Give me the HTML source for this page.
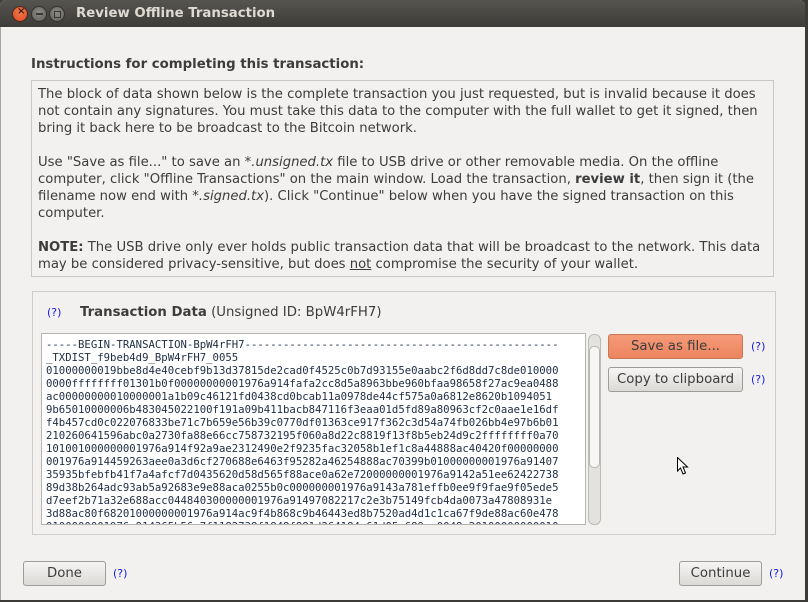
<!DOCTYPE html>
<html><head><meta charset="utf-8">
<style>
*{margin:0;padding:0;box-sizing:border-box}
body{width:808px;height:602px;background:#3c3b37;position:relative;overflow:hidden;font-family:"DejaVu Sans","Liberation Sans",sans-serif;color:#3c3c3c}
.win{position:absolute;left:0;top:0;width:805px;height:600px;background:#f2f1f0;border-radius:6px 6px 0 0;overflow:hidden;box-shadow:inset 1px 0 0 #a8a6a2}
.title{position:absolute;left:0;top:0;width:805px;height:27px;background:linear-gradient(#55544f,#3d3c38);color:#dfdbd2;font-weight:bold;font-size:13.3px;line-height:27px;padding-left:76px}
.btnc{position:absolute;top:6px;width:16px;height:16px;border-radius:50%}
.abs{position:absolute;white-space:nowrap}
.box{position:absolute;left:31px;top:80px;width:743px;height:197px;border:1px solid #c9c7c4}
.txt{font-size:13.2px;line-height:17px;color:#3c3c3c}
.frame{position:absolute;left:32px;top:291px;width:744px;height:244px;border:1px solid #cfcdca}
.ta{position:absolute;left:41px;top:333px;width:545px;height:192px;background:#fff;border:1px solid #b6b4b0;overflow:hidden}
.mono{font-family:"DejaVu Sans Mono","Liberation Mono",monospace;font-size:10.65px;line-height:13px;color:#1f2d42;position:absolute;left:4px;top:4px;white-space:pre}
.q{color:#1a1ae6;font-size:11px}
.b{position:absolute;border:1px solid #9e9c98;border-radius:3px;background:linear-gradient(#f6f5f4,#dcdad6);font-size:13.3px;text-align:center;color:#3c3c3c}
</style></head><body>
<div class="win">
<div class="title">Review Offline Transaction</div>
<div class="btnc" style="left:12px;background:radial-gradient(circle at 50% 40%,#f57a4f,#d9481f);border:1px solid #4a2a1c"><span style="position:absolute;left:4px;top:-1px;font-size:10px;color:#3a1d10;font-weight:bold">×</span></div>
<div class="btnc" style="left:31px;background:radial-gradient(circle at 50% 40%,#8d8b86,#5f5e59);border:1px solid #33322f"><span style="position:absolute;left:4px;top:6px;width:7px;height:2px;background:#3a3935"></span></div>
<div class="btnc" style="left:49px;background:radial-gradient(circle at 50% 40%,#8d8b86,#5f5e59);border:1px solid #33322f"><span style="position:absolute;left:4px;top:4px;width:7px;height:7px;border:1px solid #3a3935"></span></div>

<div class="abs" style="left:31px;top:57px;font-size:13.3px;font-weight:bold;color:#3c3c3c">Instructions for completing this transaction:</div>
<div class="box"></div>
<div class="abs txt" style="left:38px;top:86px">The block of data shown below is the complete transaction you just requested, but is invalid because it does<br>not contain any signatures. You must take this data to the computer with the full wallet to get it signed, then<br>bring it back here to be broadcast to the Bitcoin network.<br><br>Use "Save as file..." to save an <i>*.unsigned.tx</i> file to USB drive or other removable media. On the offline<br>computer, click "Offline Transactions" on the main window. Load the transaction, <b>review it</b>, then sign it (the<br>filename now end with <i>*.signed.tx</i>). Click "Continue" below when you have the signed transaction on this<br>computer.<br><br><b>NOTE:</b> The USB drive only ever holds public transaction data that will be broadcast to the network. This data<br>may be considered privacy-sensitive, but does <u>not</u> compromise the security of your wallet.</div>

<div class="frame"></div>
<div class="abs q" style="left:47px;top:306px">(?)</div>
<div class="abs" style="left:80px;top:305px;font-size:13.3px"><b>Transaction Data</b> (Unsigned ID: BpW4rFH7)</div>
<div class="ta"><div class="mono">-----BEGIN-TRANSACTION-BpW4rFH7-------------------------------------------------
_TXDIST_f9beb4d9_BpW4rFH7_0055
01000000019bbe8d4e40cebf9b13d37815de2cad0f4525c0b7d93155e0aabc2f6d8dd7c8de010000
0000ffffffff01301b0f00000000001976a914fafa2cc8d5a8963bbe960bfaa98658f27ac9ea0488
ac00000000010000001a1b09c46121fd0438cd0bcab11a0978de44cf575a0a6812e8620b1094051
9b65010000006b483045022100f191a09b411bacb847116f3eaa01d5fd89a80963cf2c0aae1e16df
f4b457cd0c022076833be71c7b659e56b39c0770df01363ce917f362c3d54a74fb026bb4e97b6b01
210260641596abc0a2730fa88e66cc758732195f060a8d22c8819f13f8b5eb24d9c2ffffffff0a70
101001000000001976a914f92a9ae2312490e2f9235fac32058b1ef1c8a44888ac40420f00000000
001976a914459263aee0a3d6cf270688e6463f95282a46254888ac70399b01000000001976a91407
35935bfebfb41f7a4afcf7d0435620d58d565f88ace0a62e72000000001976a9142a51ee62422738
89d38b264adc93ab5a92683e9e88aca0255b0c000000001976a9143a781effb0ee9f9fae9f05ede5
d7eef2b71a32e688acc044840300000001976a91497082217c2e3b75149fcb4da0073a47808931e
3d88ac80f68201000000001976a914ac9f4b868c9b46443ed8b7520ad4d1c1ca67f9de88ac60e478
0100000001976a914365b56e7f1182738f1848f881d264184c61d05c689ac0048c20100000000010</div></div>
<div style="position:absolute;left:588px;top:334px;width:13px;height:191px;border:1px solid #bdbbb7;border-radius:6px;background:#e4e2df"></div>
<div style="position:absolute;left:589px;top:346px;width:11px;height:122px;border:1px solid #b8b6b2;border-radius:5px;background:#f7f6f5"></div>
<div class="b" style="left:608px;top:334px;width:135px;height:25px;line-height:23px;background:linear-gradient(#f59a78,#ec855f);border-color:#c77858">Save as file...</div>
<div class="abs q" style="left:751px;top:340px">(?)</div>
<div class="b" style="left:608px;top:367px;width:135px;height:25px;line-height:23px">Copy to clipboard</div>
<div class="abs q" style="left:751px;top:373px">(?)</div>

<div class="b" style="left:23px;top:561px;width:83px;height:25px;line-height:23px">Done</div>
<div class="abs q" style="left:113px;top:567px">(?)</div>
<div class="b" style="left:679px;top:561px;width:83px;height:25px;line-height:23px">Continue</div>
<div class="abs q" style="left:769px;top:567px">(?)</div>
<svg style="position:absolute;left:677px;top:457px" width="12" height="19" viewBox="0 0 12 19"><path d="M0.5 0.5 L0.5 14 L3.5 11 L6 17 L8.5 16 L6 10 L10.5 10 Z" fill="#fff" stroke="#000"/></svg>
</div>
</body></html>
